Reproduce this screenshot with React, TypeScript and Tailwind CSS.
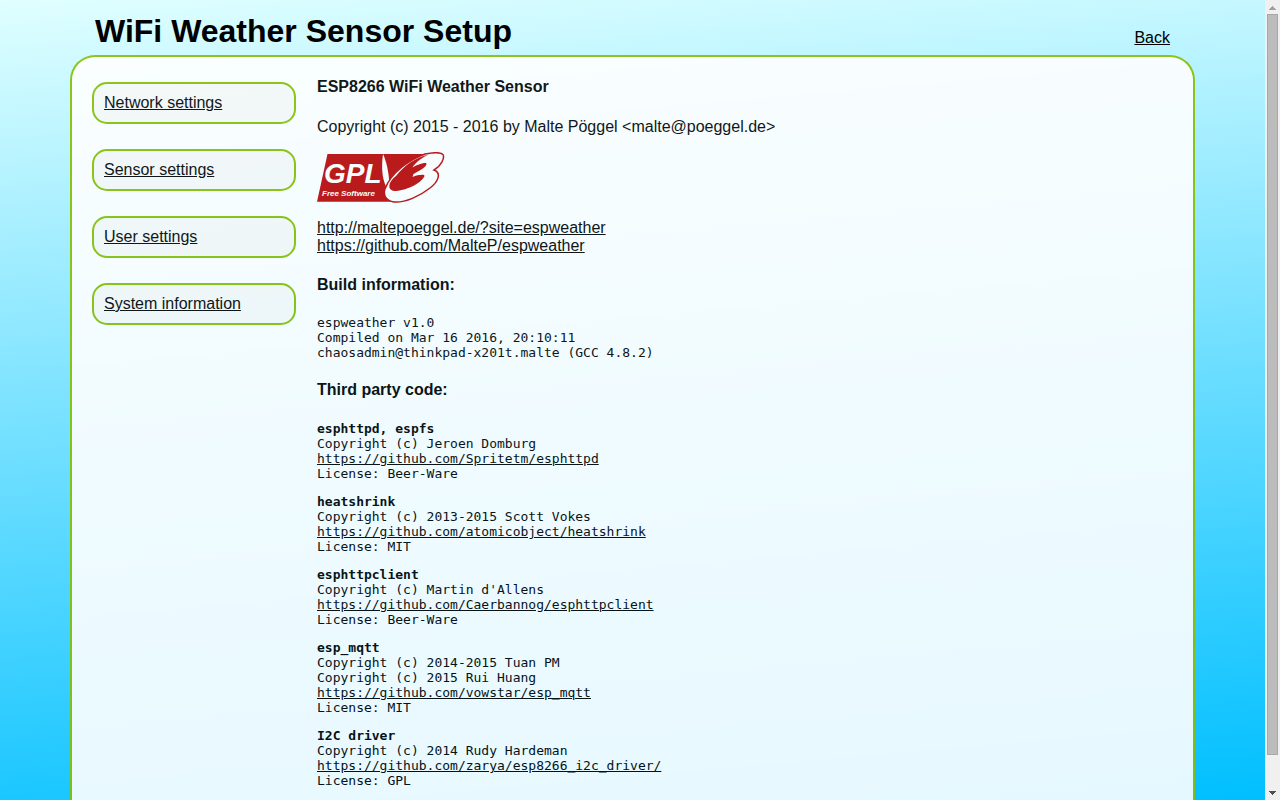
import type { ReactNode } from "react";

const menu = ["Network settings", "Sensor settings", "User settings", "System information"];

const libraries = [
  { name: "esphttpd, espfs", owners: ["Jeroen Domburg"], url: "https://github.com/Spritetm/esphttpd", license: "Beer-Ware" },
  { name: "heatshrink", owners: ["2013-2015 Scott Vokes"], url: "https://github.com/atomicobject/heatshrink", license: "MIT" },
  { name: "esphttpclient", owners: ["Martin d'Allens"], url: "https://github.com/Caerbannog/esphttpclient", license: "Beer-Ware" },
  { name: "esp_mqtt", owners: ["2014-2015 Tuan PM", "2015 Rui Huang"], url: "https://github.com/vowstar/esp_mqtt", license: "MIT" },
  { name: "I2C driver", owners: ["2014 Rudy Hardeman"], url: "https://github.com/zarya/esp8266_i2c_driver/", license: "GPL" },
];

function Heading({ children }: { children: ReactNode }) {
  return <h2 className="font-bold">{children}</h2>;
}

function GplLogo() {
  return (
    <svg className="mt-4 mb-4 block" width="128" height="51" viewBox="0 0 128 51" role="img" aria-label="GPL v3 Free Software">
      <path d="M10.5 2H112L80 49.8H0Z" fill="#bb0404" />
      <path d="M66 2C64 16 65 30 72 40C73 28 71 13 66 2Z" fill="#fff" />
      <path d="M68 37C66 43 69 49 77 50C88 51 103 44 113 36C121 30 125 21 117 18C124 14 128 6 126 2.5C124 0 116 0.5 108 2C94 7 74 20 68 37Z" fill="#fff" stroke="#bb0404" strokeWidth="1.5" />
      <path d="M112 2.6C106 5 99 10 95.5 15.5C100 13 108 10 109.5 11.5C110 15 102 19 96.5 22L95.5 25C101 22.5 108 22 107.500 24C104 32 88 39 77 39C70 38 71 30 79 24C87 14 99 5 112 2.6Z" fill="#bb0404" />
      <text x="7" y="31" fill="#fff" className="text-[28px] font-bold italic" fontFamily="Liberation Sans, sans-serif">GPL</text>
      <text x="5" y="44" fill="#fff" className="text-[8px] font-bold italic" fontFamily="Liberation Sans, sans-serif">Free Software</text>
    </svg>
  );
}

function Scrollbar() {
  return (
    <div aria-hidden="true" className="flex w-[15px] shrink-0 flex-col items-center bg-[#f0f0f0]">
      <svg width="15" height="14" viewBox="0 0 15 14" shapeRendering="crispEdges">
        <path d="M7 6h1v1h1v1h1v1h1v1H4V9h1V8h1V7h1z" fill="#a0a0a0" />
      </svg>
      <div className="w-[11px] grow border border-[#a8a8a8] bg-[#bcbcbc]" />
      <svg className="mt-9" width="15" height="9" viewBox="0 0 15 9" shapeRendering="crispEdges">
        <path d="M4 0h7v1h-1v1H9v1H8v1H7V3H6V2H5V1H4z" fill="#505050" />
      </svg>
    </div>
  );
}

export default function App() {
  return (
    <div className="flex h-screen overflow-hidden font-['Liberation_Sans',sans-serif] text-base leading-[18px] text-black">
      <div className="flex min-w-0 grow flex-col bg-[linear-gradient(175deg,#e0ffff,#00bfff)] px-[70px]">
        <header className="flex h-[55px] shrink-0 items-end justify-between px-[25px]">
          <h1 className="pb-1.5 text-[32px] leading-9 font-bold">WiFi Weather Sensor Setup</h1>
          <a href="#back" className="pb-2 underline">Back</a>
        </header>
        <div className="flex min-h-0 grow items-start gap-[21px] rounded-t-[25px] border-2 border-b-0 border-[#86c000] bg-white px-5 opacity-90">
          <nav className="flex w-[204px] shrink-0 flex-col gap-[25px] pt-[25px]">
            {menu.map((item) => (
              <a key={item} href="#settings" className="rounded-[15px] border-2 border-[#86c000] bg-[#f8f8f8] px-2.5 py-2.5 underline">
                {item}
              </a>
            ))}
          </nav>
          <main className="min-w-0 grow pt-[21px]">
            <Heading>ESP8266 WiFi Weather Sensor</Heading>
            <p className="mt-[22px]">Copyright (c) 2015 - 2016 by Malte Pöggel &lt;malte@poeggel.de&gt;</p>
            <GplLogo />
            <p>
              <a href="http://maltepoeggel.de/?site=espweather" className="underline">http://maltepoeggel.de/?site=espweather</a>
              <br />
              <a href="https://github.com/MalteP/espweather" className="underline">https://github.com/MalteP/espweather</a>
            </p>
            <div className="mt-[21px]">
              <Heading>Build information:</Heading>
            </div>
            <p className="mt-[21px] font-['DejaVu_Sans_Mono',monospace] text-[13px] leading-[15px]">
              espweather v1.0
              <br />
              Compiled on Mar 16 2016, 20:10:11
              <br />
              chaosadmin@thinkpad-x201t.malte (GCC 4.8.2)
            </p>
            <div className="mt-[21px]">
              <Heading>Third party code:</Heading>
            </div>
            <div className="mt-[22px] flex flex-col gap-[13px] font-['DejaVu_Sans_Mono',monospace] text-[13px] leading-[15px]">
              {libraries.map((lib) => (
                <section key={lib.name}>
                  <h3 className="font-bold">{lib.name}</h3>
                  {lib.owners.map((owner) => (
                    <p key={owner}>Copyright (c) {owner}</p>
                  ))}
                  <a href={lib.url} className="block w-fit underline">{lib.url}</a>
                  <p>License: {lib.license}</p>
                </section>
              ))}
            </div>
          </main>
        </div>
      </div>
      <Scrollbar />
    </div>
  );
}
